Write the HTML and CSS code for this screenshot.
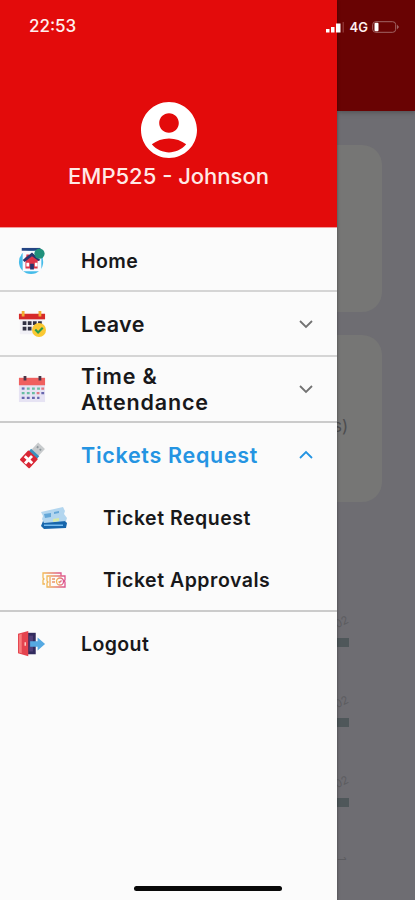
FILE: index.html
```html
<!DOCTYPE html>
<html lang="en">
<head>
<meta charset="utf-8">
<title>Employee menu</title>
<link rel="stylesheet" href="styles.css">
</head>
<body>
<div class="phone">
  <aside class="drawer">
    <header class="profile">
      <svg class="avatar" viewBox="2 2 20 20"><path fill="#fff" d="M12 2C6.48 2 2 6.48 2 12s4.48 10 10 10 10-4.480 10-10S17.520 2 12 2zm0 4c1.930 0 3.500 1.570 3.500 3.500S13.930 13 12 13s-3.500-1.570-3.500-3.500S10.070 6 12 6zm0 14c-2.030 0-4.430-.820-6.140-2.880C7.550 15.800 9.680 15 12 15s4.450.800 6.140 2.120C16.430 19.180 14.030 20 12 20z"/></svg>
      <div class="name">EMP525 - Johnson</div>
    </header>
    <nav class="menu">
      <a class="row home">
        <svg class="icon" viewBox="0 0 30 30"><circle cx="14" cy="16" r="13" fill="#45bce9"/><path fill="#f8faff" d="M5 4h20v22H5z"/><path fill="#244584" d="M4 1h20v3H4z"/><path fill="#db3549" d="M6 14l3-4V8h3v1l3-2 8 7-2 1v8H8v-8z"/><path fill="#27366f" d="M5 14l10-8 9 8-2 1-7-5-8 6zM13 18h4v6h-4z"/><path fill="#fff" d="M9 17h3v4H9zM18 17h3v4h-3z"/><circle cx="23" cy="7" r="5.500" fill="#20907b"/></svg>
        <span class="label">Home</span>
      </a>
      <a class="row leave">
        <svg class="icon" viewBox="0 0 30 30"><path fill="#f1f0f6" d="M2 8h25v18H2z"/><path fill="#d62a29" d="M1 4h28v6H1z"/><path fill="#f2ad31" d="M4 1h3v6H4zM22 1h3v6h-3z"/><path fill="#303043" d="M5 12h4v4H5zm5.500 0h4v4h-4zm5.500 0h4v4h-4zm5.500 0h4v3h-4zM5 18h4v4H5zm5.500 0h4v4h-4z"/><circle cx="22.500" cy="21.500" r="7.500" fill="#fac832"/><path d="M18.500 21l3 3 5-5" fill="none" stroke="#2b9b4d" stroke-width="2.300"/></svg>
        <span class="label">Leave</span>
        <svg class="chevron" viewBox="0 0 14 10"><path d="M1 2l6 6 6-6"/></svg>
      </a>
      <a class="row time">
        <svg class="icon" viewBox="0 0 30 30"><path fill="#e6e3f3" d="M1 7h28v22H1z"/><path fill="#f0605f" d="M1 3h28v8H1z"/><path fill="#4b3447" d="M6 1h3v5H6zM22 1h3v5h-3z"/><g fill="none" stroke-width="2.400" stroke-dasharray="3 2.500"><path stroke="#6970b1" d="M4 14.500h4"/><path stroke="#69bda2" d="M9.500 14.500h14M4 19.500h14"/><path stroke="#e17682" d="M25 14.500h3M20 19.500h3"/><path stroke="#6766ad" d="M4 24.500h19M25 19.500h3"/></g></svg>
        <span class="label">Time &amp;<br>Attendance</span>
        <svg class="chevron" viewBox="0 0 14 10"><path d="M1 2l6 6 6-6"/></svg>
      </a>
      <section class="group">
        <a class="row tickets">
          <svg class="icon" viewBox="0 0 30 30"><g transform="translate(0 1) rotate(43 15 15)"><path fill="#c8cbcd" d="M10 0h10v11H10z"/><path fill="#8c969c" d="M12 3h2v2h-2zm4 0h2v2h-2z"/><path fill="#3a91bd" d="M9 10h12v4H9z"/><rect x="8" y="13" width="14" height="14" rx="1" fill="#d92735"/><path fill="#fff" d="M13.500 15h3v4h4v3h-4v4h-3v-4h-4v-3h4z"/></g></svg>
          <span class="label">Tickets Request</span>
          <svg class="chevron" viewBox="0 0 14 10"><path d="M1 8l6-6 6 6"/></svg>
        </a>
        <a class="row sub requests">
          <svg class="icon small" viewBox="0 0 28 24"><path fill="#1766ac" d="M3 15l21-1 3 3-1 5-22 1-3-3z"/><path fill="#78bdf0" d="M4 18.500h19v1.500H4z"/><path fill="#b3d6ef" d="M1 6l22-5 2 4-1 3 3 4-1 3-22 2-2-4 1-3z"/><path fill="#64a7d8" d="M4 8l7-1v4l-6 1zM14 6l5-1v2l-5 1z"/><path fill="#d6e9a9" d="M13 13l6-1v3l-6 1z"/></svg>
          <span class="label">Ticket Request</span>
        </a>
        <a class="row sub approvals">
          <svg class="icon small" viewBox="0 0 28 24"><defs><linearGradient id="warm"><stop stop-color="#f2ba55"/><stop offset="1" stop-color="#dc528d"/></linearGradient></defs><g fill="none" stroke="url(#warm)" stroke-width="1.300"><path d="M5 16H3v-4l1-1-1-1V5h18v3"/><path d="M7 8h18v4l-1 1 1 1v5H7v-4l1-1-1-1zM10 9v9M12 11h3M12 14h3"/><circle cx="20" cy="13.500" r="3.500"/><path d="M18.500 13.500l1 1 2-2"/></g></svg>
          <span class="label">Ticket Approvals</span>
        </a>
      </section>
      <a class="row logout">
        <svg class="icon" viewBox="1 0 30 30"><path fill="#322b5e" d="M9 3h11v23H9z"/><path fill="#51407a" d="M13 6h4v17h-4z"/><path fill="#e4434e" d="M1 4l11-3v27L1 25z"/><path fill="#f77b7c" d="M2 5l3-1v21l-3-1z"/><path fill="#ffd4ca" d="M8 13h1.500v4H8z"/><path fill="#55a9e2" d="M14 12h8V8l8 7-8 7v-4h-8z"/></svg>
        <span class="label">Logout</span>
      </a>
    </nav>
  </aside>
  <main class="behind">
    <div class="appbar"></div>
    <div class="card"></div>
    <div class="card second"><span>s)</span></div>
    <div class="chart">
      <div class="tick"><span>02</span><i></i></div>
      <div class="tick"><span>02</span><i></i></div>
      <div class="tick"><span>02</span><i></i></div>
      <div class="tick end"><span>1</span></div>
    </div>
  </main>
  <div class="status">
    <span class="clock">22:53</span>
    <svg class="signal" viewBox="0 0 20 12"><path fill="#fff" d="M0 8h3.500v3.500H0zM5 6h3.500v5.500H5zM10 2.500h4.500v9H10z"/><path fill="#8c3030" d="M16.500 1h1.500v10.500h-1.500z"/></svg>
    <span class="network">4G</span>
    <svg class="battery" viewBox="0 0 28 12"><rect x=".7" y=".7" width="23" height="10.600" rx="3" fill="none" stroke="#a06464"/><rect x="2.500" y="1.700" width="4" height="8.600" rx="1" fill="#fff"/><path d="M25 3.500l2 2.500-2 2.500z" fill="#a06464"/></svg>
  </div>
  <div class="home-bar"></div>
</div>
</body>
</html>
```
FILE: styles.css
```css
* { box-sizing: border-box; }
body { margin: 0; font-family: Inter, "Liberation Sans", sans-serif; }
.phone { position: relative; display: grid; grid-template-columns: 337px 1fr; width: 415px; height: 900px; overflow: hidden; background: #6e6d72; }
.drawer { z-index: 1; background: #fbfbfb; box-shadow: 0 0 3px #0006; }
.profile { height: 228px; padding-top: 102px; display: flex; flex-direction: column; align-items: center; background: #e30b0b; border-bottom: 1px solid #f39c9c; }
.avatar { width: 56px; height: 56px; }
.name { margin-top: 3px; color: #ffe9e6; font-size: 22px; line-height: 30px; font-weight: 500; letter-spacing: 0; white-space: nowrap; }
.row { display: flex; align-items: center; padding-left: 18px; color: #18181a; font-size: 21.5px; line-height: 26px; font-weight: 600; letter-spacing: .7px; }
.icon { width: 28px; height: 28px; flex: none; }
.label { margin-left: 35px; white-space: nowrap; }
.chevron { width: 14px; height: 10px; margin-left: auto; margin-right: 24px; fill: none; stroke: #727272; stroke-width: 1.8; }
.home { height: 64px; padding-top: 3px; border-bottom: 2px solid #d5d5d5; font-size: 19.5px; letter-spacing: .4px; }
.leave { height: 65px; border-bottom: 2px solid #d5d5d5; letter-spacing: .35px; }
.time { height: 66px; border-bottom: 2px solid #cbcbcb; letter-spacing: .85px; }
.group { height: 189px; border-bottom: 2px solid #cbcbcb; }
.tickets { height: 64px; color: #2494e2; }
.tickets .chevron { stroke: #2494e2; }
.sub { height: 62px; padding-left: 40px; font-size: 19.5px; letter-spacing: .52px; }
.small { width: 28px; height: 24px; }
.sub .label { margin-left: 35px; }
.logout { height: 64px; font-size: 19.5px; letter-spacing: .4px; }
.behind { min-width: 0; }
.appbar { height: 111px; background: #690303; box-shadow: 0 1px 5px #3338; }
.card { width: 45px; height: 167px; margin-top: 34px; border-radius: 0 20px 20px 0; background: #767675; }
.card.second { margin-top: 23px; padding-top: 80px; color: #4d4d4f; font-size: 17px; line-height: 22px; }
.card.second span { margin-left: -4px; }
.chart { padding-top: 113px; }
.tick { height: 80px; color: #5c5c60; font-size: 11px; line-height: 15px; }
.tick span { display: block; width: 12px; margin-left: -2px; transform: rotate(-25deg); }
.tick i { display: block; width: 12px; height: 9px; margin-top: 8px; background: #4f575a; }
.end span { transform: rotate(90deg); }
.status { position: absolute; z-index: 2; top: 17px; left: 29px; width: 371px; height: 20px; display: flex; align-items: center; color: #fff0ee; }
.clock { font-size: 17px; line-height: 19px; height: 20px; font-weight: 500; }
.signal { width: 20px; height: 12px; margin-left: auto; }
.network { margin: 0 4px; font-size: 13px; line-height: 20px; font-weight: 600; }
.battery { width: 28px; height: 12px; }
.home-bar { position: absolute; z-index: 2; left: 134px; bottom: 9px; width: 148px; height: 5px; border-radius: 3px; background: #080808; }
```
